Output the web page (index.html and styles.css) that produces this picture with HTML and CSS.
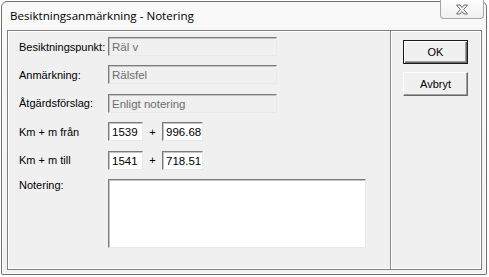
FILE: index.html
```html
<!DOCTYPE html>
<html>
<head>
<meta charset="utf-8">
<link rel="stylesheet" href="styles.css">
</head>
<body>
<div class="window">
  <div class="titlebar">
    <span class="title">Besiktningsanmärkning - Notering</span>
    <div class="close">
      <svg width="14" height="11" viewBox="0 0 14 11">
        <path d="M1.5 1 L5 1 L7 3.5 L9 1 L12.5 1 L8.7 5.5 L12.5 10 L9 10 L7 7.5 L5 10 L1.5 10 L5.3 5.5 Z" fill="#f4f4f4" stroke="#6e6e6e" stroke-width="1"/>
      </svg>
    </div>
  </div>
  <div class="client">
    <div class="form">
      <div class="row"><span class="label">Besiktningspunkt:</span><div class="field disabled wide">Räl v</div></div>
      <div class="row"><span class="label">Anmärkning:</span><div class="field disabled wide">Rälsfel</div></div>
      <div class="row"><span class="label">Åtgärdsförslag:</span><div class="field disabled wide">Enligt notering</div></div>
      <div class="row"><span class="label">Km + m från</span><div class="field km">1539</div><span class="plus">+</span><div class="field m">996.68</div></div>
      <div class="row"><span class="label">Km + m till</span><div class="field km">1541</div><span class="plus">+</span><div class="field m">718.51</div></div>
      <div class="row tall"><span class="label">Notering:</span><div class="field note"></div></div>
    </div>
    <div class="buttons">
      <div class="btn default">OK</div>
      <div class="btn">Avbryt</div>
    </div>
  </div>
</div>
</body>
</html>
```

FILE: styles.css
```css
html, body {
  margin: 0;
  padding: 0;
  background: #ffffff;
}
body {
  font-family: "Liberation Sans", Arial, sans-serif;
  font-size: 11px;
  color: #000;
}
.window {
  box-sizing: border-box;
  width: 486px;
  height: 274px;
  margin: 1px 0 0 1px;
  border: 1px solid #6f6f6f;
  border-radius: 6px 6px 2px 2px;
  background: linear-gradient(#f9f9f9, #f1f1f1);
  box-shadow: inset 0 0 0 1px #fbfbfb;
  padding: 0 4px 4px 5px;
  display: flex;
  flex-direction: column;
}
.titlebar {
  height: 28px;
  display: flex;
  align-items: flex-start;
  justify-content: space-between;
}
.title {
  font-family: "Open Sans", "Noto Sans", sans-serif;
  font-size: 11.6px;
  margin: 6px 0 0 3px;
  color: #000;
}
.close {
  box-sizing: border-box;
  width: 44px;
  height: 19px;
  margin-top: -2px;
  margin-right: -2px;
  border: 1px solid #a5a5a5;
  border-top: none;
  border-radius: 0 0 4px 4px;
  background: linear-gradient(#fdfdfd, #f0f0f0);
  display: flex;
  align-items: center;
  justify-content: center;
  padding-top: 1px;
}
.client {
  flex: 1;
  display: flex;
  border: 1px solid #7f7f7f;
  background: #f0f0f0;
  box-shadow: inset 0 0 0 1px #ffffff;
}
.form {
  box-sizing: border-box;
  width: 383px;
  border-right: 1px solid #8a8a8a;
  box-shadow: 1px 0 0 #ffffff;
  padding: 6px 0 0 11px;
  display: flex;
  flex-direction: column;
  gap: 9.4px;
}
.row {
  display: flex;
  align-items: center;
  height: 19px;
}
.row.tall {
  height: 69px;
  align-items: flex-start;
}
.label {
  width: 89px;
  flex: none;
}
.field {
  box-sizing: border-box;
  height: 19px;
  border: 1px solid;
  border-color: #7b7b7b #e9e9e9 #e9e9e9 #7b7b7b;
  box-shadow: inset 1px 1px 0 #c4c4c4;
  background: #ffffff;
  padding: 2px 0 0 3px;
  line-height: 14px;
  font-size: 11.5px;
  white-space: nowrap;
}
.field.disabled {
  background: #f0f0f0;
  color: #6d6d6d;
}
.field.wide {
  width: 169px;
}
.field.km {
  width: 35px;
}
.field.m {
  width: 41px;
}
.plus {
  width: 19px;
  text-align: center;
  font-size: 11px;
}
.field.note {
  width: 258px;
  height: 69px;
}
.buttons {
  flex: 1;
  padding: 9px 0 0 12px;
  display: flex;
  flex-direction: column;
  gap: 8px;
}
.btn {
  box-sizing: border-box;
  width: 65px;
  height: 24px;
  border: 1px solid;
  border-color: #ffffff #696969 #696969 #ffffff;
  box-shadow: inset -1px -1px 0 #a0a0a0;
  background: #f0f0f0;
  display: flex;
  align-items: center;
  justify-content: center;
  font-size: 11px;
}
.btn.default {
  border: 1px solid #1a1a1a;
  box-shadow: inset 1px 1px 0 #ffffff, inset -1px -1px 0 #696969, inset -2px -2px 0 #a0a0a0;
}
```
